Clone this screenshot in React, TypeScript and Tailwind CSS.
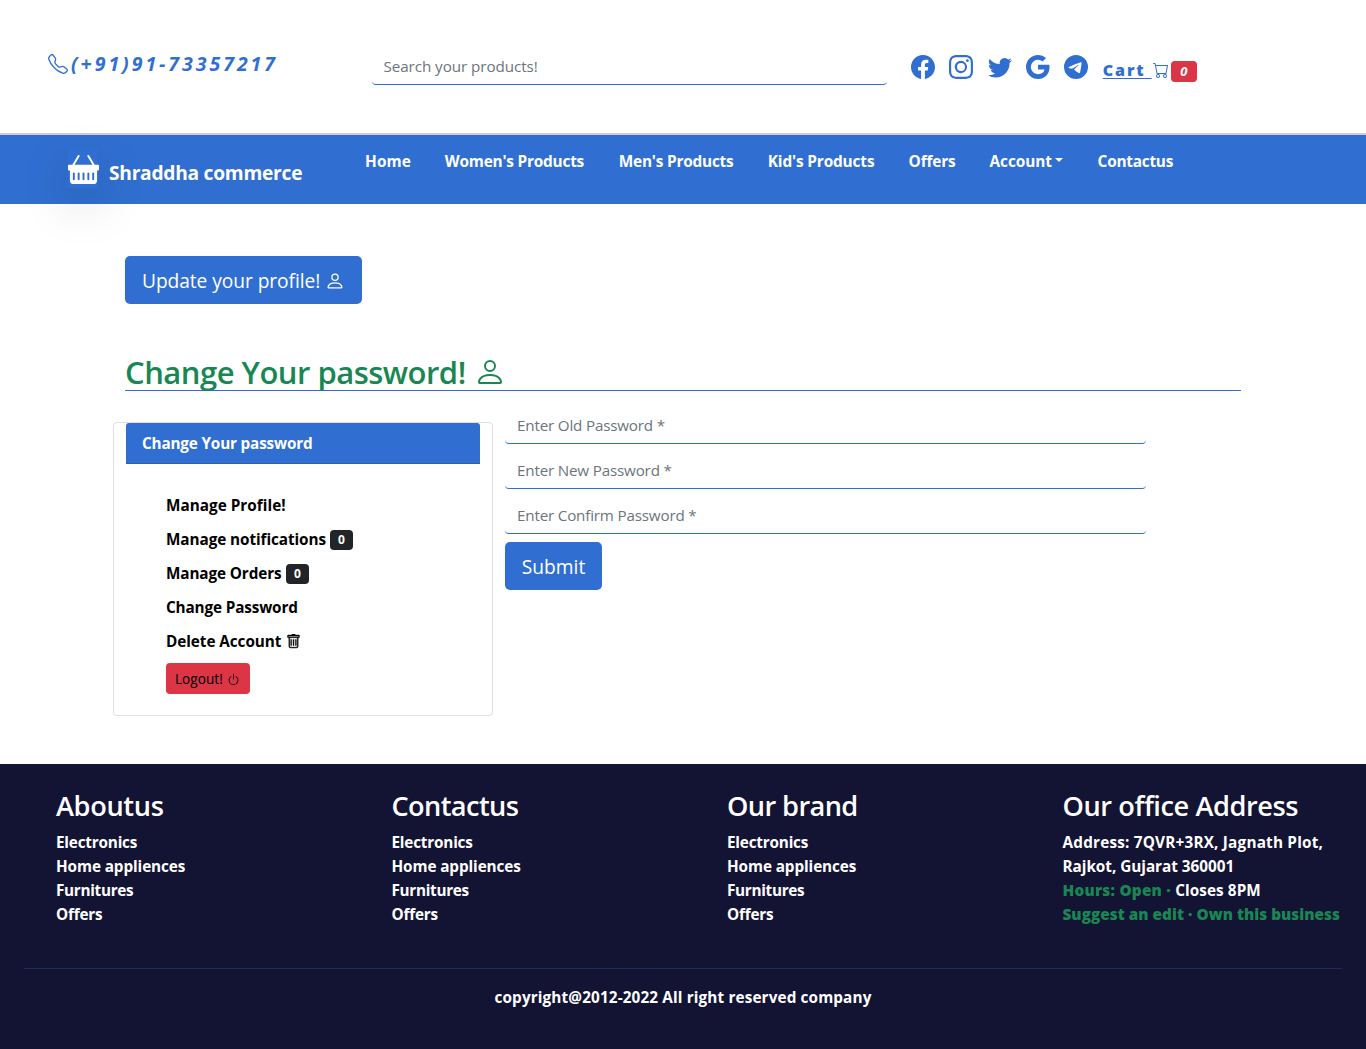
import type { ReactNode } from 'react';
import {
  BsBasketFill,
  BsCart,
  BsFacebook,
  BsGoogle,
  BsInstagram,
  BsPerson,
  BsPower,
  BsTelegram,
  BsTelephone,
  BsTrash,
  BsTwitter,
} from 'react-icons/bs';

const navItems = [
  { label: 'Home', style: 'w-[45.8px] tracking-[0.1px]' },
  { label: "Women's Products", style: 'w-[140px] tracking-[-0.22px]' },
  { label: "Men's Products", style: 'w-[115px] tracking-[-0.22px]' },
  { label: "Kid's Products", style: 'w-[106.8px] tracking-[-0.15px]' },
  { label: 'Offers', style: 'w-[47px] tracking-[-0.15px]' },
  { label: 'Account', style: 'w-[74px] tracking-[-0.1px]', caret: true },
  { label: 'Contactus', style: 'w-[76px] tracking-[-0.25px]' },
];

const footerColumns = [
  { title: 'Aboutus', style: 'tracking-[-0.35px]' },
  { title: 'Contactus', style: 'tracking-[-0.62px]' },
  { title: 'Our brand', style: 'tracking-[-0.6px]' },
];

function TopBar() {
  return (
    <header className="flex h-[135px] border-b-2 border-[#ced0d3] pl-12 text-[#306fd1]">
      <div className="mt-[52px] flex h-6 w-[324px] items-center">
        <BsTelephone size={20} />
        <span className="ml-[3px] whitespace-nowrap text-[19.5px] leading-6 font-bold italic tracking-[2.97px]">
          (+91)91-73357217
        </span>
      </div>
      <input
        className="mt-12 h-[37px] w-[515px] rounded border-b border-[#306fd1] px-[11.5px] text-[15.2px] tracking-[-0.06px] outline-none placeholder:text-[#6c757d]"
        placeholder="Search your products!"
      />
      <div className="mt-[55px] ml-6 flex h-6 gap-[14.35px]">
        <BsFacebook size={24} />
        <BsInstagram size={24} />
        <BsTwitter size={24} />
        <BsGoogle size={24} />
        <BsTelegram size={24} />
      </div>
      <a className="mt-[58px] ml-[14.4px] flex h-6 items-center" href="#">
        <span className="-mt-px w-[49px] whitespace-pre text-[16px] leading-6 font-extrabold tracking-[1.9px] underline underline-offset-2">
          {'Cart '}
        </span>
        <BsCart size={16} className="ml-px -mt-px" />
        <span className="mt-[3px] ml-0.5 flex h-[21px] w-[26px] items-center justify-center rounded bg-[#dc3545] text-[13px] font-bold italic text-white">
          0
        </span>
      </a>
    </header>
  );
}

function NavBar() {
  return (
    <nav className="flex h-[69px] bg-[#306fd1] font-bold text-white">
      <div className="mt-[13px] ml-[68px] flex w-[297px]">
        <span className="flex h-10 w-[30px] items-center bg-[#306fd1] pt-px shadow-[0_16px_48px_rgba(0,0,0,0.175)]">
          <BsBasketFill size={31} className="shrink-0" />
        </span>
        <span className="relative mt-[9px] ml-[11px] whitespace-nowrap text-[19.2px] leading-8 font-bold tracking-[-0.26px]">
          Shraddha commerce
        </span>
      </div>
      <div className="mt-[15px] flex h-6 gap-[34px]">
        {navItems.map((item) => (
          <a key={item.label} href="#" className="flex items-center whitespace-nowrap text-[15.4px] leading-6">
            <span className={item.style + ' flex items-center'}>
              {item.label}
              {item.caret && (
                <i className="-mt-1 ml-[3px] border-x-4 border-t-4 border-x-transparent border-t-white" />
              )}
            </span>
          </a>
        ))}
      </div>
    </nav>
  );
}

function CountBadge() {
  return (
    <span className="mt-px ml-auto inline-flex h-5 w-[23px] items-center justify-center rounded bg-[#212529] pt-px text-xs font-bold text-white">
      0
    </span>
  );
}

function MenuItem({ children, width = '' }: { children: ReactNode; width?: string }) {
  return <li className={'flex h-6 items-center leading-6 whitespace-nowrap ' + width}>{children}</li>;
}

function AccountMenu() {
  return (
    <aside className="h-[294px] w-[380px] rounded border border-[#dfdfdf] px-3 text-[15.3px] font-bold text-black">
      <div className="h-[41px] rounded-t-[3px] border-b border-[#2a61b8] bg-[#306fd1] px-4 leading-10 tracking-[-0.18px] text-white">
        Change Your password
      </div>
      <ul className="mt-[29px] ml-10 flex flex-col gap-[10px]">
        <MenuItem>
          <span className="tracking-[0.02px]">Manage Profile!</span>
        </MenuItem>
        <MenuItem width="w-[187px]">
          <span className="tracking-[-0.08px]">Manage notifications</span>
          <CountBadge />
        </MenuItem>
        <MenuItem width="w-[143px]">
          <span className="tracking-[-0.12px]">Manage Orders</span>
          <CountBadge />
        </MenuItem>
        <MenuItem>
          <span className="tracking-[-0.15px]">Change Password</span>
        </MenuItem>
        <MenuItem width="w-[135px]">
          <span className="tracking-[-0.06px]">Delete Account</span>
          <BsTrash size={15} className="ml-auto stroke-current stroke-[0.4px]" />
        </MenuItem>
      </ul>
      <button className="mt-[10px] ml-10 flex h-[31px] w-[84px] items-center rounded bg-[#dc3545] pt-0.5 pl-[9px] text-[13.6px] font-normal tracking-[0.02px]">
        Logout!
        <BsPower size={13} className="-mt-px ml-1" />
      </button>
    </aside>
  );
}

function PasswordForm() {
  const input =
    'h-[37px] rounded border-b border-[#306fd1] px-3 text-[15.2px] tracking-[-0.18px] outline-none placeholder:text-[#6c757d]';
  return (
    <form className="-mt-[15px] ml-3 flex w-[641px] flex-col gap-2">
      <input className={input} placeholder="Enter Old Password *" />
      <input className={input} placeholder="Enter New Password *" />
      <input className={input} placeholder="Enter Confirm Password *" />
      <button
        type="button"
        className="h-12 w-[97px] rounded-[5px] bg-[#306fd1] pt-0.5 text-[19.2px] text-white"
      >
        Submit
      </button>
    </form>
  );
}

function Footer() {
  return (
    <footer className="h-[285px] overflow-hidden bg-[#131333] px-6 pt-[25px] text-white">
      <div className="ml-8 grid h-[179px] grid-cols-[repeat(4,335.5px)]">
        {footerColumns.map(({ title, style }) => (
          <section key={title}>
            <h3 className={'mb-[7px] text-[27.2px] leading-[34px] font-semibold ' + style}>{title}</h3>
            <ul className="text-[15.3px] leading-6 font-bold tracking-[-0.2px]">
              <li>Electronics</li>
              <li className="tracking-[-0.1px]">Home appliences</li>
              <li className="tracking-[-0.3px]">Furnitures</li>
              <li>Offers</li>
            </ul>
          </section>
        ))}
        <section className="whitespace-nowrap">
          <h3 className="mb-[7px] text-[27.2px] leading-[34px] font-semibold tracking-[-0.42px]">Our office Address</h3>
          <div className="text-[15.3px] leading-6 font-bold">
            <p className="tracking-[0.2px]">Address: 7QVR+3RX, Jagnath Plot,</p>
            <p className="tracking-[-0.03px]">Rajkot, Gujarat 360001</p>
            <p>
              <span className="font-extrabold tracking-[0.24px] text-[#198754]">Hours: Open · </span>
              <span className="tracking-[0.08px]">Closes 8PM</span>
            </p>
            <p className="font-extrabold tracking-[0.03px] text-[#198754]">
              Suggest an edit · Own this business
            </p>
          </div>
        </section>
      </div>
      <div className="border-t border-[#1c2b63] pt-4 text-center text-[15.3px] leading-6 font-bold tracking-[0.13px]">
        copyright@2012-2022 All right reserved company
      </div>
    </footer>
  );
}

export default function App() {
  return (
    <div className="w-[1366px] bg-white font-['Open_Sans','Noto_Sans',sans-serif]">
      <TopBar />
      <NavBar />
      <main className="h-[560px] pt-[52px]">
        <button className="ml-[125px] flex h-12 w-[237px] items-center rounded-[5px] bg-[#306fd1] pt-0.5 pl-[17px] text-[19.2px] whitespace-nowrap tracking-[-0.07px] text-white">
          Update your profile!
          <BsPerson size={20} className="ml-[5px]" />
        </button>
        <h2 className="mt-12 ml-[125px] flex h-[39px] w-[1116px] items-center border-b border-[#306fd1] pt-0.5 text-[31px] font-semibold tracking-[-0.51px] text-[#198754]">
          Change Your password!
          <BsPerson size={32} className="-mt-px ml-2" />
        </h2>
        <div className="mt-[31px] ml-[113px] flex">
          <AccountMenu />
          <PasswordForm />
        </div>
      </main>
      <Footer />
    </div>
  );
}
